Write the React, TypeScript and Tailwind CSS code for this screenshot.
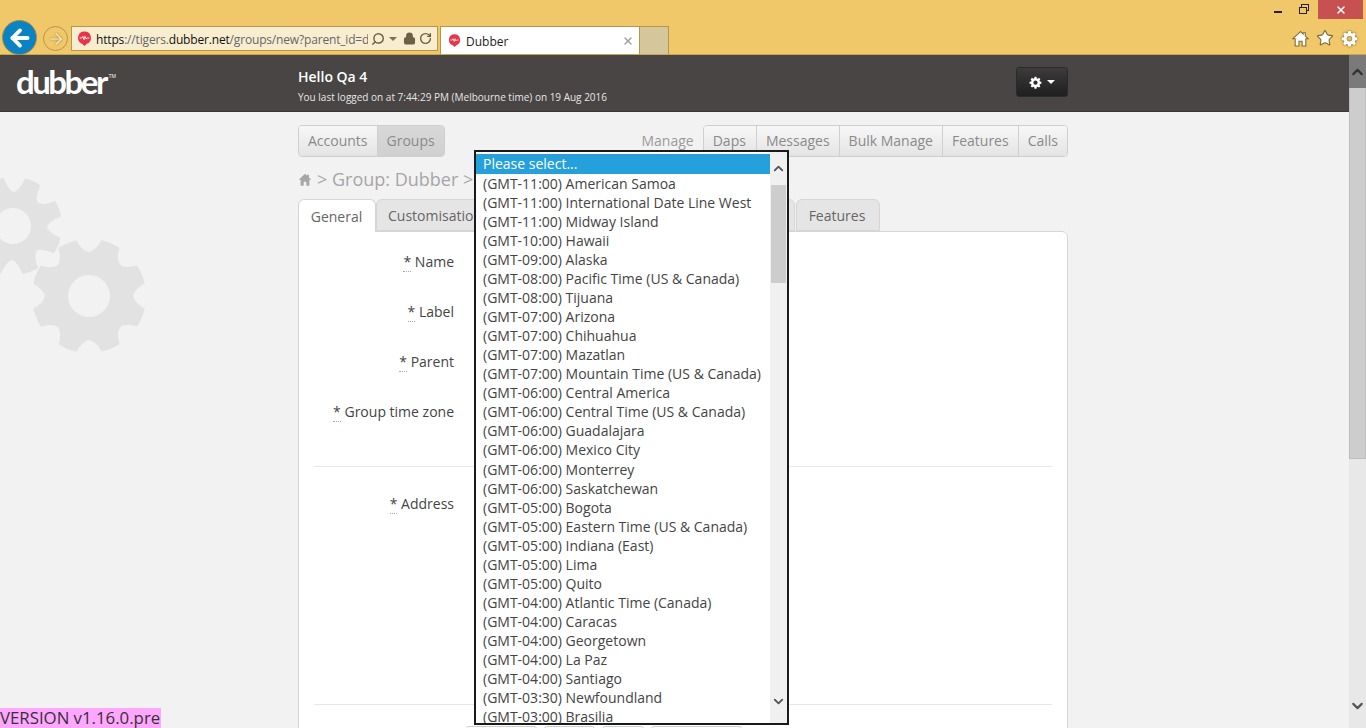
import { ArrowLeft, ArrowRight, ChevronDown, ChevronUp, Lock, RotateCw, Search, Star, X } from "lucide-react"

const zones = [
  "(GMT-11:00) American Samoa",
  "(GMT-11:00) International Date Line West",
  "(GMT-11:00) Midway Island",
  "(GMT-10:00) Hawaii",
  "(GMT-09:00) Alaska",
  "(GMT-08:00) Pacific Time (US & Canada)",
  "(GMT-08:00) Tijuana",
  "(GMT-07:00) Arizona",
  "(GMT-07:00) Chihuahua",
  "(GMT-07:00) Mazatlan",
  "(GMT-07:00) Mountain Time (US & Canada)",
  "(GMT-06:00) Central America",
  "(GMT-06:00) Central Time (US & Canada)",
  "(GMT-06:00) Guadalajara",
  "(GMT-06:00) Mexico City",
  "(GMT-06:00) Monterrey",
  "(GMT-06:00) Saskatchewan",
  "(GMT-05:00) Bogota",
  "(GMT-05:00) Eastern Time (US & Canada)",
  "(GMT-05:00) Indiana (East)",
  "(GMT-05:00) Lima",
  "(GMT-05:00) Quito",
  "(GMT-04:00) Atlantic Time (Canada)",
  "(GMT-04:00) Caracas",
  "(GMT-04:00) Georgetown",
  "(GMT-04:00) La Paz",
  "(GMT-04:00) Santiago",
  "(GMT-03:30) Newfoundland",
  "(GMT-03:00) Brasilia",
]

// Builds an 8 tooth cog outline around 0,0
function cogPath(outer: number, inner: number, rotate: number) {
  const teeth = 8
  const points: string[] = []
  for (let i = 0; i < teeth; i++) {
    const a = rotate + (i * Math.PI * 2) / teeth
    const step = (Math.PI * 2) / teeth
    const at = (r: number, t: number) => `${(r * Math.cos(t)).toFixed(1)} ${(r * Math.sin(t)).toFixed(1)}`
    points.push(`${i === 0 ? "M" : "L"}${at(outer, a - step * 0.22)}`)
    points.push(`Q${at(outer + 1, a)} ${at(outer, a + step * 0.22)}`)
    points.push(`Q${at(inner + 2, a + step * 0.3)} ${at(inner, a + step * 0.5)}`)
    points.push(`Q${at(inner + 2, a + step * 0.7)} ${at(outer, a + step * 0.78)}`)
  }
  return points.join(" ") + " Z"
}

function Cogs() {
  return (
    <svg width="298" height="200" viewBox="0 0 298 200" className="mt-[62px] block">
      <g transform="translate(13 52)" fill="#e2e2e2">
        <path fillRule="evenodd" d={`${cogPath(49, 34, 0.42)} M18 0 A18 18 0 1 0 -18 0 A18 18 0 1 0 18 0 Z`} />
      </g>
      <g transform="translate(89 122)" fill="#e2e2e2">
        <path fillRule="evenodd" d={`${cogPath(57, 44, 0.39)} M21 0 A21 21 0 1 0 -21 0 A21 21 0 1 0 21 0 Z`} />
      </g>
    </svg>
  )
}

function DubberPin({ size }: { size: number }) {
  return (
    <svg width={size} height={size} viewBox="0 0 14 14" className="shrink-0">
      <path d="M7 .4a6 6 0 0 1 2 11.66L7 14l-2-1.94A6 6 0 0 1 7 .4z" fill="#e8344a" />
      <path d="M2.500 6.500h2l1-1.500 1 3 1-3 1 2.500.8-1h2.200" fill="none" stroke="#fff" strokeWidth=".8" />
    </svg>
  )
}

function GearIcon({ className }: { className?: string }) {
  return (
    <svg viewBox="0 0 16 16" className={className} fill="currentColor">
      <path
        fillRule="evenodd"
        d="M6.800 1h2.400l.3 1.900 1.200.5 1.600-1.100 1.700 1.700-1.100 1.600.5 1.200 1.900.3v2.400l-1.900.3-.5 1.200 1.100 1.600-1.700 1.700-1.600-1.100-1.200.5-.3 1.900H6.800l-.3-1.900-1.200-.5-1.600 1.100L2 12.600l1.100-1.600-.5-1.200L.7 9.500V7.100l1.900-.3.5-1.200L2 4l1.700-1.700 1.600 1.100 1.200-.5zM8 5.600a2.600 2.600 0 1 0 0 5.200 2.600 2.600 0 0 0 0-5.200z"
      />
    </svg>
  )
}

function HomeIcon({ className, outline }: { className?: string; outline?: string }) {
  return (
    <svg viewBox="0 0 16 16" className={className} fill="currentColor" stroke={outline} strokeWidth={outline ? 1 : 0}>
      <path d="M8 1.500 0.800 8.200h2.200V15h3.500v-4.500h3V15H13V8.200h2.200L12.500 5.700V2.500h-2v1.300z" />
    </svg>
  )
}

function BrowserChrome() {
  return (
    <div className="flex h-[55px] border-b border-[#c4a458] bg-[#f0c869]">
      <div className="flex flex-1 items-end pl-[2px]">
        <div className="mb-[-1px] flex h-[35px] w-[35px] items-center justify-center rounded-full border border-[#a58a44] bg-[#0a83c4]">
          <ArrowLeft size={26} strokeWidth={3.5} color="#fff" />
        </div>
        <div className="mb-[3px] ml-[6px] flex h-[25px] w-[25px] items-center justify-center rounded-full border border-[#b5964a]">
          <ArrowRight size={18} strokeWidth={1.5} color="#fbeecb" className="drop-shadow-[0_0_1px_#8a6d2a]" />
        </div>
        <div className="mb-[3px] ml-[3px] flex h-[25px] w-[367px] items-center border border-[#b5964a] bg-[#f9edcf] pl-[5px] pr-[2px]">
          <DubberPin size={15} />
          <div className="ml-[4px] w-[272px] overflow-hidden whitespace-nowrap pt-[2px] text-[12px] tracking-[-0.17px] text-[#666]">
            <span className="text-[#111]">https</span>://tigers.<span className="text-[#111]">dubber.net</span>/groups/new?parent_id=d
          </div>
          <Search size={14} strokeWidth={2.5} color="#6b6146" className="ml-[3px] -scale-x-100" />
          <div className="ml-[4px] h-0 w-0 border-x-[4px] border-t-[4px] border-x-transparent border-t-[#77705c]" />
          <Lock size={13} strokeWidth={2.5} color="#6b6146" fill="#6b6146" className="ml-[6px]" />
          <RotateCw size={13} strokeWidth={2.5} color="#6b6146" className="ml-[3px]" />
        </div>
        <div className="ml-[2px] flex h-[28px] w-[200px] items-center self-end border-x border-t border-[#b5964a] bg-white pl-[7px] pr-[5px]">
          <DubberPin size={13} />
          <span className="ml-[5px] flex-1 pt-[2px] text-[12px] text-[#222]">Dubber</span>
          <X size={12} strokeWidth={3} color="#a3a3a3" />
        </div>
        <div className="h-[28px] w-[29px] border-r border-t border-[#b5964a] bg-[#d5c69b]" />
      </div>
      <div className="flex w-[180px] flex-col items-end">
        <div className="flex h-[19px] items-start">
          <div className="mt-[11px] h-[2px] w-[8px] bg-[#222]" />
          <div className="relative ml-[17px] mt-[4px] h-[10px] w-[10px]">
            <div className="absolute right-0 top-0 h-[7px] w-[8px] border border-[#222]" />
            <div className="absolute bottom-0 left-0 h-[7px] w-[8px] border border-[#222] bg-[#f0c869]" />
          </div>
          <div className="ml-[9px] mr-[3px] flex h-[19px] w-[45px] items-center justify-center bg-[#c75050]">
            <X size={12} strokeWidth={3} color="#fff" />
          </div>
        </div>
        <div className="mt-[10px] flex items-center pr-[8px]">
          <HomeIcon className="h-[17px] w-[17px] text-white" outline="#7c6a38" />
          <Star size={18} strokeWidth={1.5} color="#7c6a38" fill="#fff" className="ml-[7px]" />
          <GearIcon className="ml-[7px] h-[17px] w-[17px] text-white drop-shadow-[0_0_1px_#5c4d24]" />
        </div>
      </div>
    </div>
  )
}

function AppHeader() {
  return (
    <div className="flex h-[57px] border-b border-[#3a3837] bg-[#484544] text-white">
      <div className="w-[298px] whitespace-nowrap pl-[16px] pt-[6px]">
        <span className="text-[33px] font-bold leading-[40px] tracking-[-2.5px] [font-family:'Lato',sans-serif]">dubber</span>
        <span className="ml-[3px] align-top text-[5px] leading-[30px]">TM</span>
      </div>
      <div className="w-[718px] pt-[12px]">
        <div className="text-[14px] font-semibold leading-[20px]">Hello Qa 4</div>
        <div className="mt-[3px] text-[10px] leading-[14px] text-[#e6e6e6]">You last logged on at 7:44:29 PM (Melbourne time) on 19 Aug 2016</div>
      </div>
      <div className="pt-[12px]">
        <div className="flex h-[30px] w-[52px] items-center justify-center gap-[5px] rounded-[3px] border border-[#2a2a2a] bg-gradient-to-b from-[#3c3c3c] to-[#1f1f1f]">
          <GearIcon className="h-[13px] w-[13px] text-white" />
          <div className="h-0 w-0 border-x-[4px] border-t-[4px] border-x-transparent border-t-white" />
        </div>
      </div>
    </div>
  )
}

function NavButton({ label, active, className = "" }: { label: string; active?: boolean; className?: string }) {
  return (
    <div
      className={`flex h-full items-center border-r border-[#cfcfcf] px-[9px] pb-[2px] last:border-r-0 ${className} ${
        active ? "bg-gradient-to-b from-[#d8d8d8] to-[#d0d0d0]" : "bg-gradient-to-b from-[#f7f7f7] to-[#e4e4e4]"
      }`}
    >
      {label}
    </div>
  )
}

function FormRow({ label, className }: { label: string; className: string }) {
  return (
    <div className={`flex justify-end text-[14px] leading-[20px] text-[#444] ${className}`}>
      <span>
        <span className="border-b border-dotted border-[#aaa]">*</span> {label}
      </span>
    </div>
  )
}

function GroupForm() {
  return (
    <div className="h-[600px] rounded-tr-[6px] border border-[#d5d5d5] bg-white px-[15px]">
      <div className="w-[140px]">
        <FormRow label="Name" className="mt-[20px]" />
        <FormRow label="Label" className="mt-[30px]" />
        <FormRow label="Parent" className="mt-[30px]" />
        <FormRow label="Group time zone" className="mt-[30px]" />
      </div>
      <div className="mt-[44px] border-t border-[#e8e8e8]" />
      <div className="w-[140px]">
        <FormRow label="Address" className="mt-[27px]" />
      </div>
      <div className="mt-[190px] border-t border-[#e8e8e8]" />
      {/* Row of small buttons, only its top edge shows under the list */}
      <div className="ml-[152px] mt-[21px] flex gap-[7px]">
        <div className="h-[30px] w-[71px] rounded-[3px] border border-[#cfcfcf]" />
        <div className="h-[30px] w-[51px] rounded-[3px] border border-[#cfcfcf]" />
        <div className="h-[30px] w-[42px] rounded-[3px] border border-[#cfcfcf]" />
        <div className="h-[30px] w-[91px] rounded-[3px] border border-[#cfcfcf]" />
      </div>
    </div>
  )
}

function TimeZoneList() {
  return (
    <div className="absolute left-[474px] top-[150px] flex h-[575px] w-[315px] overflow-hidden border-2 border-[#1a1a1a] bg-white pt-[2px] text-[14px] leading-[19px] text-[#444]">
      <div className="w-[294px]">
        <div className="h-[20px] bg-[#26a0da] pl-[7px] leading-[20px] text-white">Please select...</div>
        {zones.map((zone, index) => (
          <div key={zone} className={`whitespace-nowrap pl-[7px] ${index === 15 ? "mt-px" : ""}`}>
            {zone}
          </div>
        ))}
      </div>
      <div className="mt-[-2px] flex w-[17px] flex-col bg-[#f0f0f0] pl-px pr-px">
        <div className="flex h-[33px] items-center justify-center">
          <ChevronUp size={17} strokeWidth={3} color="#555" />
        </div>
        <div className="h-[98px] bg-[#cdcdcd]" />
        <div className="flex flex-1 items-end justify-center pb-[13px]">
          <ChevronDown size={17} strokeWidth={3} color="#555" />
        </div>
      </div>
    </div>
  )
}

export default function App() {
  return (
    <div className="relative flex h-[728px] w-[1366px] flex-col overflow-hidden bg-[#f2f2f2] [font-family:'Open_Sans',sans-serif]">
      <BrowserChrome />
      <div className="flex h-[673px]">
        <div className="w-[1349px]">
          <AppHeader />
          <div className="flex">
            <div className="w-[298px]">
              <Cogs />
            </div>
            <div className="w-[770px] pt-[13px]">
              <div className="flex h-[32px] items-center justify-between text-[14px] text-[#8a8a8a]">
                <div className="flex h-full overflow-hidden rounded-[4px] border border-[#cfcfcf]">
                  <NavButton label="Accounts" />
                  <NavButton label="Groups" active />
                </div>
                <div className="flex h-full items-center">
                  <span className="mb-[2px] mr-[9px] text-[#9a9a9a]">Manage</span>
                  <div className="flex h-full overflow-hidden rounded-[4px] border border-[#cfcfcf]">
                    <NavButton label="Daps" className="pr-[10px]" />
                    <NavButton label="Messages" />
                    <NavButton label="Bulk Manage" />
                    <NavButton label="Features" />
                    <NavButton label="Calls" />
                  </div>
                </div>
              </div>
              <div className="mt-[10px] flex h-[24px] items-center whitespace-nowrap text-[18px] text-[#a6a6a6]">
                <HomeIcon className="mr-[5px] h-[15px] w-[14px]" />
                &gt; Group: Dubber &gt;
              </div>
              <div className="mt-[8px] flex h-[33px] text-[14px] text-[#666]">
                <div className="z-10 flex h-[33px] w-[78px] items-center justify-center rounded-t-[6px] border border-b-0 border-[#d5d5d5] bg-white pr-[1px]">
                  General
                </div>
                <div className="flex h-[32px] w-[419px] items-center rounded-t-[6px] border border-[#d5d5d5] bg-[#e5e5e5] pl-[11px]">
                  Customisation
                </div>
                <div className="ml-[1px] flex h-[32px] w-[84px] items-center justify-center rounded-t-[6px] border border-[#d5d5d5] bg-[#e5e5e5] pr-[2px]">
                  Features
                </div>
              </div>
              <div className="-mt-px">
                <GroupForm />
              </div>
            </div>
          </div>
        </div>
        <div className="flex w-[17px] flex-col bg-[#e8e8e8]">
          <div className="flex h-[33px] shrink-0 items-center justify-center bg-[#7a7a7a]">
            <ChevronUp size={18} strokeWidth={3} color="#333" />
          </div>
          <div className="h-[371px] shrink-0 border-x border-b border-[#bdbdbd] bg-[#cdcdcd]" />
          <div className="flex flex-1 items-end justify-center pb-[13px]">
            <ChevronDown size={18} strokeWidth={3} color="#555" />
          </div>
        </div>
      </div>
      <TimeZoneList />
      <div className="absolute bottom-0 left-0 bg-[#ffa6ff] pr-px text-[16.8px] leading-[20px] text-[#333]">VERSION v1.16.0.pre</div>
    </div>
  )
}
